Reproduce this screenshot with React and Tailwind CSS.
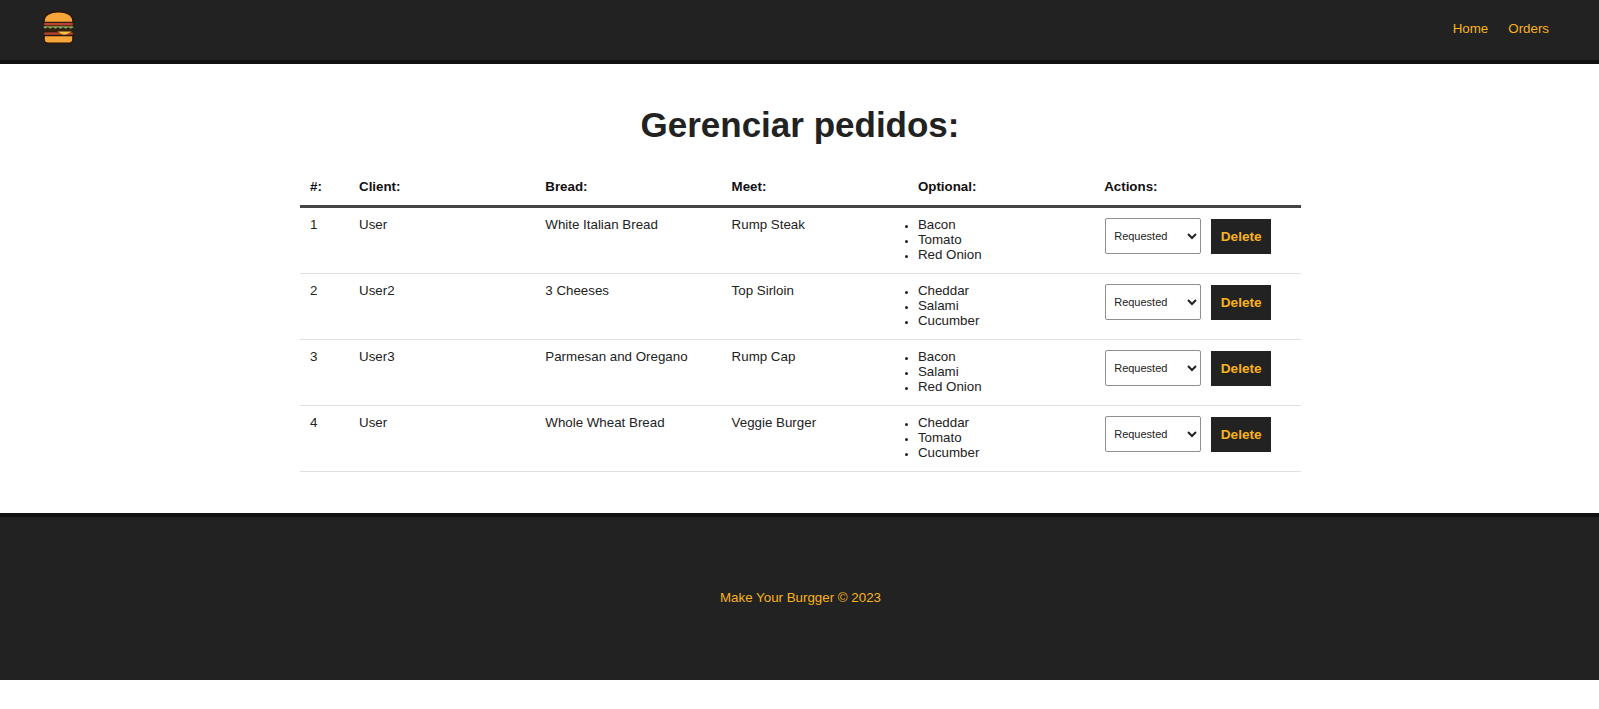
import React from 'react';

const orders = [
  { id: 1, client: 'User', bread: 'White Italian Bread', meat: 'Rump Steak', optional: ['Bacon', 'Tomato', 'Red Onion'] },
  { id: 2, client: 'User2', bread: '3 Cheeses', meat: 'Top Sirloin', optional: ['Cheddar', 'Salami', 'Cucumber'] },
  { id: 3, client: 'User3', bread: 'Parmesan and Oregano', meat: 'Rump Cap', optional: ['Bacon', 'Salami', 'Red Onion'] },
  { id: 4, client: 'User', bread: 'Whole Wheat Bread', meat: 'Veggie Burger', optional: ['Cheddar', 'Tomato', 'Cucumber'] },
];

const gridCols = 'grid grid-cols-[59px_186.3px_186.3px_186.3px_186.3px_1fr]';

const BurgerLogo = () => (
  <svg width="31" height="33" viewBox="0 0 30 33" preserveAspectRatio="none">
    <path d="M1 11.500 V10 C1 4 7 0.750 15 0.750 C23 0.750 29 4 29 10 V11.500 Z" fill="#f5a53a" stroke="#2a1608" strokeWidth="1.500" />
    <rect x="0.750" y="11.500" width="28.500" height="3.500" rx="1" fill="#b8452e" stroke="#2a1608" strokeWidth="0.800" />
    <path d="M0.500 15 H29.500 V16.500 L27 18 L24.500 16.500 L22 18 L19.500 16.500 L17 18 L14.500 16.500 L12 18 L9.500 16.500 L7 18 L4.500 16.500 L2 18 L0.500 16.500 Z" fill="#8fa85a" stroke="#2a1608" strokeWidth="0.500" />
    <rect x="1.500" y="18" width="27" height="3" fill="#33200f" />
    <rect x="0.750" y="21" width="28.500" height="3.500" rx="1" fill="#b8452e" stroke="#2a1608" strokeWidth="0.800" />
    <path d="M14 20.500 H28 L20.500 24.500 Z" fill="#f9c23c" />
    <path d="M1 24.500 H29 V28 C29 30.500 27.500 32.250 25 32.250 H5 C2.500 32.250 1 30.500 1 28 Z" fill="#f5a53a" stroke="#2a1608" strokeWidth="1.500" />
  </svg>
);

const OrderRow = ({ order }) => (
  <div className={`${gridCols} h-[66px] border-b border-[#e0e0e0] text-[13.33px] leading-[15px] text-[#222]`}>
    <div className="pl-[10px] pt-[9px]">{order.id}</div>
    <div className="pt-[9px]">{order.client}</div>
    <div className="pt-[9px]">{order.bread}</div>
    <div className="pt-[9px]">{order.meat}</div>
    <ul className="list-disc pl-0 pt-[9px] marker:text-[11px]">
      {order.optional.map((item) => (
        <li key={item}>{item}</li>
      ))}
    </ul>
    <div className="flex items-start pl-[1px] pt-[10px]">
      <select className="h-[36px] w-[96px] rounded-[2px] border border-[#8f8f8f] bg-white pl-[4px] text-[11px] text-[#222]">
        <option>Requested</option>
        <option>In production</option>
        <option>Finished</option>
      </select>
      <button className="ml-[10px] mt-[1px] h-[35px] w-[60px] bg-[#222] pb-[1px] text-[13.6px] font-bold text-[#f7b31c]">
        Delete
      </button>
    </div>
  </div>
);

const App = () => {
  return (
    <div className="min-h-[709px] bg-white font-['Liberation_Sans',Arial,sans-serif]">
      {/* Navbar */}
      <nav className="flex h-[64px] items-center justify-between border-b-4 border-[#111] bg-[#222] pl-[43px] pr-[50px]">
        <div className="mb-[5px] flex">
          <BurgerLogo />
        </div>
        <div className="mb-[3px] flex gap-[20px] text-[13.33px] text-[#f7b31c]">
          <a href="#">Home</a>
          <a href="#">Orders</a>
        </div>
      </nav>

      {/* Orders */}
      <main className="h-[449px] pt-[40px]">
        <h1 className="pl-[1px] text-center text-[35px] font-bold leading-[42px] text-[#222]">Gerenciar pedidos:</h1>
        <div className="ml-[300px] mt-[22px] w-[1001px]">
          <div className={`${gridCols} h-[40px] border-b-[3px] border-[#444] pt-[11px] text-[13.33px] font-bold leading-[15px] text-[#111]`}>
            <div className="pl-[10px]">#:</div>
            <div>Client:</div>
            <div>Bread:</div>
            <div>Meet:</div>
            <div>Optional:</div>
            <div>Actions:</div>
          </div>
          {orders.map((order) => (
            <OrderRow key={order.id} order={order} />
          ))}
        </div>
      </main>

      {/* Footer */}
      <footer className="flex h-[167px] items-center justify-center border-t-4 border-[#111] bg-[#222] pb-[2px] pl-[2px] text-[13.33px] text-[#f7b31c]">
        <p>Make Your Burgger © 2023</p>
      </footer>
    </div>
  );
};

export default App;
